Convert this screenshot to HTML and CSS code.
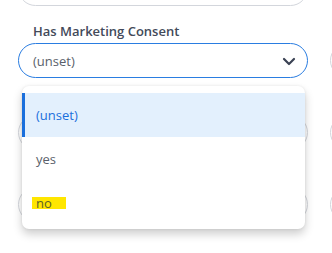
FILE: index.html
```html
<!DOCTYPE html>
<html lang="en">

<head>
    <meta charset="UTF-8">
    <meta name="viewport" content="width=device-width, initial-scale=1.0">
    <title>Contact filters</title>
    <link rel="stylesheet" href="styles.css">
</head>

<body>

    <div class="form">
        <div class="col">
            <div class="field">
                <label>Email</label>
                <div class="input"></div>
            </div>
            <div class="field open">
                <label>Has Marketing Consent</label>
                <div class="input select">
                    <span class="value">(unset)</span>
                    <svg class="chevron" width="14" height="9" viewBox="0 0 14 9">
                        <path d="M2 2l5 5 5-5" fill="none" stroke="#3b4254" stroke-width="2.2" stroke-linecap="round" stroke-linejoin="round" />
                    </svg>
                </div>

                <!-- 
                    下拉选项
                -->
                <ul class="options">
                    <li class="active">(unset)</li>
                    <li>yes</li>
                    <li><mark>no</mark></li>
                </ul>
            </div>
            <div class="field">
                <label>Country</label>
                <div class="input"></div>
            </div>
            <div class="field">
                <label>City</label>
                <div class="input"></div>
            </div>
        </div>

        <div class="col">
            <div class="field">
                <label>Phone</label>
                <div class="input"></div>
            </div>
            <div class="field">
                <label>Language</label>
                <div class="input"></div>
            </div>
            <div class="field">
                <label>Source</label>
                <div class="input"></div>
            </div>
            <div class="field">
                <label>Tags</label>
                <div class="input"></div>
            </div>
        </div>
    </div>

</body>

</html>
```

FILE: styles.css
```css
* {
    margin: 0;
    padding: 0;
    box-sizing: border-box;
}

ul {
    list-style: none;
}

html {
    overflow: hidden;
}

body {
    font-family: "Open Sans", "Liberation Sans", sans-serif;
    font-size: 13px;
    color: #3b4254;
    background: #fff;
}

.form {
    display: grid;
    grid-template-columns: 290px 290px;
    column-gap: 22px;
    padding: 0 18px 60px;
    margin-top: -66px;
}

.field {
    position: relative;
    padding-top: 16px;
}

.field label {
    display: block;
    height: 18px;
    line-height: 18px;
    margin-bottom: 3px;
    padding-left: 15px;
    font-weight: 600;
    color: #434a5a;
}

.input {
    height: 35px;
    border: 1px solid #d3d6dc;
    border-radius: 18px;
    background: #fff;
}

.select {
    display: flex;
    align-items: center;
    justify-content: space-between;
    padding: 0 11px 0 14px;
    border-color: #2a7de1;
}

.select .value {
    color: #5a5f6b;
}

.chevron {
    margin-top: 1px;
}

.open {
    z-index: 5;
}

.options {
    position: absolute;
    top: calc(100% + 8px);
    left: 4px;
    right: 3px;
    padding: 7px 0 4px;
    background: #fff;
    border-radius: 7px;
    box-shadow: 0 5px 10px rgba(0, 0, 0, 0.2), 0 0 3px rgba(0, 0, 0, 0.08);
}

.options li {
    height: 44px;
    line-height: 44px;
    padding-left: 14px;
    color: #5a5f6b;
}

.options li.active {
    background: #e3f0fd;
    border-left: 3px solid #1a6fdc;
    padding-left: 11px;
    color: #1a6fdc;
}

.options mark {
    display: inline-block;
    height: 12px;
    line-height: 12px;
    padding: 0 14px 0 4px;
    margin-left: -4px;
    background: #ffe600;
    color: #5a5f2b;
}
```
